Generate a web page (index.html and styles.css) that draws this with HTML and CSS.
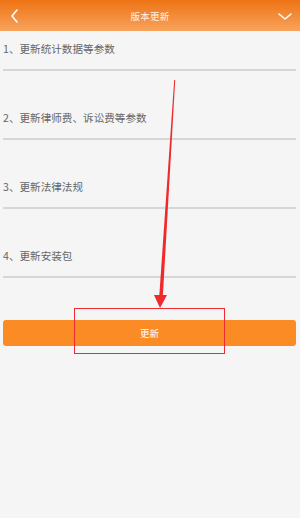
FILE: index.html
```html
<!DOCTYPE html>
<html lang="zh-CN">
<head>
    <meta charset="UTF-8">
    <meta name="viewport" content="width=device-width, initial-scale=1.0">
    <title>版本更新</title>
    <link rel="stylesheet" href="styles.css">
</head>
<body>
    <div class="header">
        <svg class="icon" width="20" height="20" viewBox="0 0 20 20">
            <path d="M12 4 L7 10 L12 16" fill="none" stroke="#fff" stroke-width="1.6" stroke-linecap="round" stroke-linejoin="round"/>
        </svg>
        <span class="title">版本更新</span>
        <svg class="icon" width="20" height="20" viewBox="0 0 20 20">
            <path d="M4 8 L10 13 L16 8" fill="none" stroke="#fff" stroke-width="1.6" stroke-linecap="round" stroke-linejoin="round"/>
        </svg>
    </div>
    <div class="list">
        <div class="item">1、更新统计数据等参数</div>
        <div class="item">2、更新律师费、诉讼费等参数</div>
        <div class="item">3、更新法律法规</div>
        <div class="item">4、更新安装包</div>
    </div>
    <button class="update-btn">更新</button>

    <!-- annotation drawn over the screenshot -->
    <svg class="mark" width="300" height="518" viewBox="0 0 300 518">
        <polygon points="174.2,80 175.2,80 162.8,297 159.2,297" fill="#ef2a2a"/>
        <polygon points="154,295 167,295 160,308" fill="#ef2a2a"/>
    </svg>
    <div class="mark-box"></div>
</body>
</html>
```

FILE: styles.css
```css
body {
    margin: 0;
    background-color: #f5f5f5;
    font-family: "Noto Sans CJK SC", "Noto Sans", sans-serif;
    height: 518px;
    position: relative;
    overflow: hidden;
}
.header {
    height: 31px;
    background: linear-gradient(#ee7314, #f8a35c);
    display: flex;
    align-items: center;
    justify-content: space-between;
    padding: 0 5px;
}
.icon {
    display: block;
}
.title {
    color: #fff3e8;
    font-size: 9.5px;
    letter-spacing: 0.3px;
}
.list {
    display: flex;
    flex-direction: column;
}
.item {
    height: 54px;
    margin: 0 4px 0 3px;
    padding-bottom: 13px;
    border-bottom: 2px solid #d6d6d6;
    display: flex;
    align-items: flex-end;
    font-size: 10.6px;
    line-height: 14px;
    color: #666;
}
.item:first-child {
    height: 25px;
}
.update-btn {
    display: block;
    width: 293px;
    height: 26px;
    margin: 42px 0 0 3px;
    padding: 0;
    border: none;
    border-radius: 3px;
    background-color: #fb8b24;
    color: #fff;
    font-family: inherit;
    font-size: 9.5px;
}
.mark {
    position: absolute;
    left: 0;
    top: 0;
}
.mark-box {
    position: absolute;
    left: 74px;
    top: 308px;
    width: 149px;
    height: 44px;
    border: 1.5px solid #ec2b35;
}
```
